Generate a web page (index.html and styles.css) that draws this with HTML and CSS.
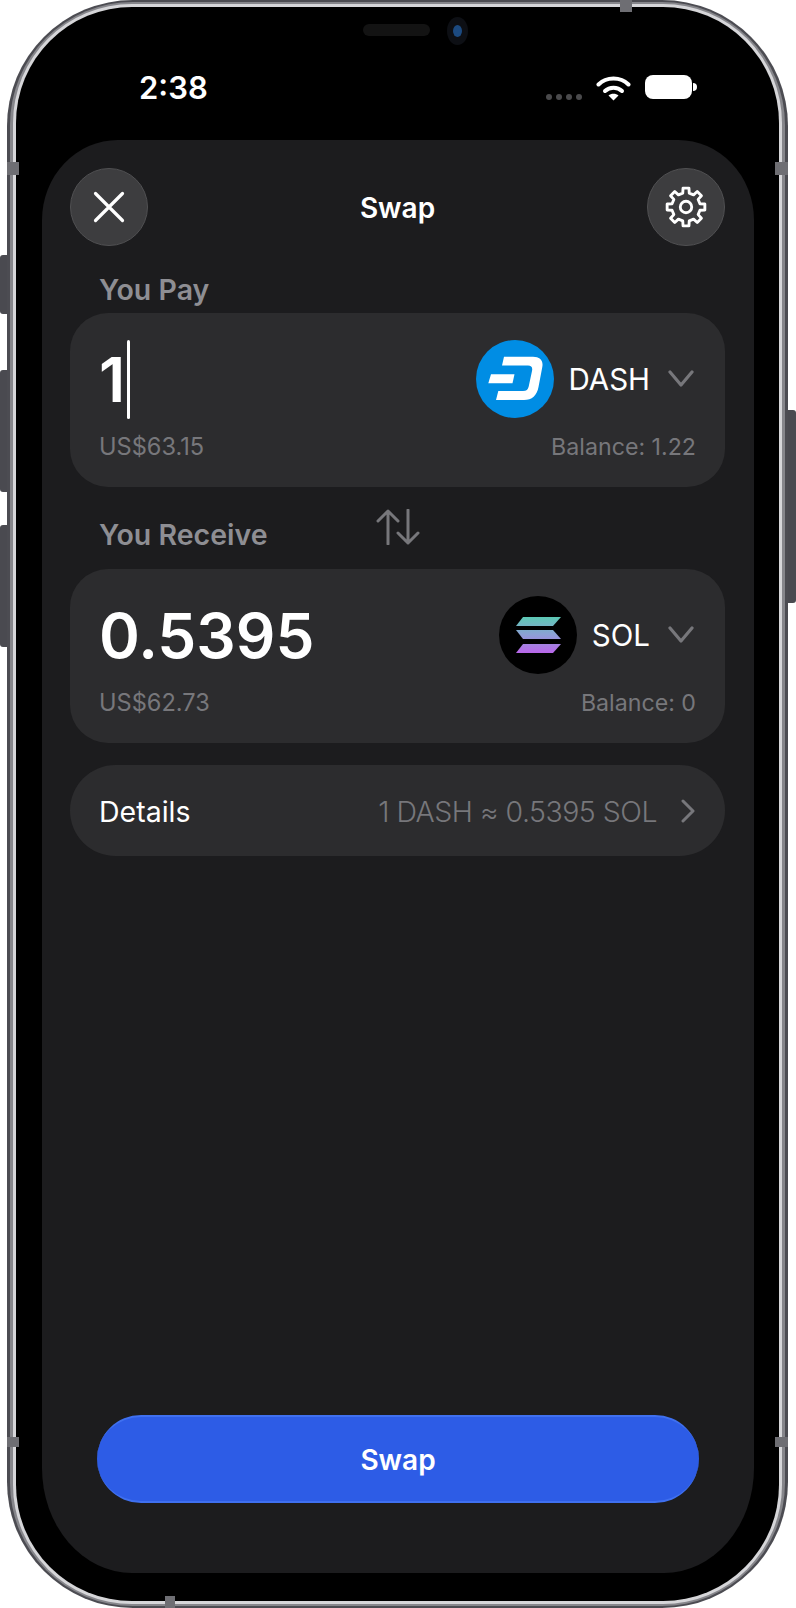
FILE: index.html
```html
<!DOCTYPE html>
<html lang="en">
<head>
    <meta charset="UTF-8">
    <meta name="viewport" content="width=device-width, initial-scale=1.0">
    <title>Swap</title>
    <link rel="stylesheet" href="styles.css">
</head>
<body>
    <div class="device">
        <!-- hardware buttons -->
        <span class="side-btn btn-mute"></span>
        <span class="side-btn btn-up"></span>
        <span class="side-btn btn-down"></span>
        <span class="side-btn btn-power"></span>

        <div class="frame">
            <div class="rim">
                <div class="screen">
                    <span class="speaker"></span>
                    <span class="camera"></span>

                    <div class="status-bar">
                        <span class="time">2:38</span>
                        <div class="status-icons">
                            <div class="signal"><i></i><i></i><i></i><i></i></div>
                            <svg class="wifi" width="35" height="26" viewBox="0 0 35 26">
                                <path d="M2.500 9.500C10.500 1.500 24.500 1.500 32.500 9.500" fill="none" stroke="#fff" stroke-width="4" stroke-linecap="round"/>
                                <path d="M9 16C13.500 11.500 21.500 11.500 26 16" fill="none" stroke="#fff" stroke-width="4" stroke-linecap="round"/>
                                <path d="M12.500 20.500C15 18.300 20 18.300 22.500 20.500L17.500 25.500Z" fill="#fff"/>
                            </svg>
                            <div class="battery"><span class="battery-body"></span><span class="battery-nub"></span></div>
                        </div>
                    </div>

                    <div class="sheet">
                        <div class="sheet-header">
                            <button class="round-btn">
                                <svg width="32" height="32" viewBox="0 0 32 32">
                                    <path d="M2.500 2.500L29.500 29.500M29.500 2.500L2.500 29.500" fill="none" stroke="#fff" stroke-width="3.200" stroke-linecap="round"/>
                                </svg>
                            </button>
                            <div class="sheet-title">Swap</div>
                            <button class="round-btn">
                                <svg width="42" height="42" viewBox="-22 -22 44 44">
                                    <polygon points="-3.400,-14.600 -3.100,-19.750 3.100,-19.750 3.400,-14.600 7.950,-12.720 11.760,-16.180 16.180,-11.760 12.720,-7.950 14.600,-3.400 19.750,-3.100 19.750,3.100 14.600,3.400 12.720,7.950 16.180,11.760 11.760,16.180 7.950,12.720 3.400,14.600 3.100,19.750 -3.100,19.750 -3.400,14.600 -7.950,12.720 -11.760,16.180 -16.180,11.760 -12.720,7.950 -14.600,3.400 -19.750,3.100 -19.750,-3.100 -14.600,-3.400 -12.720,-7.950 -16.180,-11.760 -11.760,-16.180 -7.950,-12.720" fill="none" stroke="#fff" stroke-width="3" stroke-linejoin="round"/>
                                    <circle r="6" fill="none" stroke="#fff" stroke-width="3"/>
                                </svg>
                            </button>
                        </div>

                        <div class="pay-label">You Pay</div>
                        <div class="token-card">
                            <div class="token-row">
                                <div class="amount">1<span class="caret"></span></div>
                                <div class="token">
                                    <svg class="token-icon" width="78" height="78" viewBox="0 0 78 78">
                                        <circle cx="39" cy="39" r="39" fill="#008de4"/>
                                        <path d="M28 16.700H57C64 16.700 67.500 20.500 66.300 27L62.500 47C61 55.500 56 60 48 60H20L22.300 51H47C50.500 51 52 49.500 52.700 46.500L56 31C56.800 27.500 55.500 25.500 52 25.500H26Z" fill="#fff"/>
                                        <path d="M15 34.300H38.500L36.500 43.300H12.300Z" fill="#fff"/>
                                    </svg>
                                    <span class="token-name">DASH</span>
                                    <svg class="chevron" width="26" height="18" viewBox="0 0 26 18">
                                        <path d="M2 2L13 15L24 2" fill="none" stroke="#77777b" stroke-width="3.200" stroke-linecap="round" stroke-linejoin="round"/>
                                    </svg>
                                </div>
                            </div>
                            <div class="sub-row">
                                <span>US$63.15</span>
                                <span class="balance">Balance: 1.22</span>
                            </div>
                        </div>

                        <div class="receive-row">
                            <div class="receive-label">You Receive</div>
                            <svg class="swap-arrows" width="44" height="36" viewBox="0 0 44 36">
                                <path d="M12 35V2M2 12L12 2L22 12M32 1V34M22 24L32 34L42 24" fill="none" stroke="#77777b" stroke-width="3" stroke-linecap="round" stroke-linejoin="round"/>
                            </svg>
                        </div>
                        <div class="token-card">
                            <div class="token-row">
                                <div class="amount">0.5395</div>
                                <div class="token">
                                    <svg class="token-icon" width="78" height="78" viewBox="0 0 78 78">
                                        <defs>
                                            <linearGradient id="solGrad" gradientUnits="userSpaceOnUse" x1="0" y1="21" x2="0" y2="57">
                                                <stop offset="0" stop-color="#5cc9b4"/>
                                                <stop offset="0.5" stop-color="#8e9fd6"/>
                                                <stop offset="1" stop-color="#b966ea"/>
                                            </linearGradient>
                                        </defs>
                                        <circle cx="39" cy="39" r="39" fill="#000"/>
                                        <polygon points="24,21 62,21 54,30 17,30" fill="url(#solGrad)"/>
                                        <polygon points="17,34 54,34 62,43 24,43" fill="url(#solGrad)"/>
                                        <polygon points="24,48 62,48 54,57 17,57" fill="url(#solGrad)"/>
                                    </svg>
                                    <span class="token-name">SOL</span>
                                    <svg class="chevron" width="26" height="18" viewBox="0 0 26 18">
                                        <path d="M2 2L13 15L24 2" fill="none" stroke="#77777b" stroke-width="3.200" stroke-linecap="round" stroke-linejoin="round"/>
                                    </svg>
                                </div>
                            </div>
                            <div class="sub-row">
                                <span>US$62.73</span>
                                <span class="balance">Balance: 0</span>
                            </div>
                        </div>

                        <div class="details">
                            <span class="details-label">Details</span>
                            <span class="details-rate">1 DASH ≈ 0.5395 SOL</span>
                            <svg width="14" height="24" viewBox="0 0 14 24">
                                <path d="M2 2L12 12L2 22" fill="none" stroke="#77777b" stroke-width="3" stroke-linecap="round" stroke-linejoin="round"/>
                            </svg>
                        </div>

                        <button class="swap-btn">Swap</button>
                    </div>
                </div>
            </div>
        </div>

        <!-- antenna bands -->
        <span class="band band-tl"></span>
        <span class="band band-tr"></span>
        <span class="band band-bl"></span>
        <span class="band band-br"></span>
        <span class="band band-top"></span>
        <span class="band band-bottom"></span>
    </div>
</body>
</html>
```

FILE: styles.css
```css
* {
    box-sizing: border-box;
}
html, body {
    margin: 0;
    padding: 0;
    background-color: white;
}
body {
    font-family: Inter, "Liberation Sans", sans-serif;
    color: white;
}
.device {
    position: relative;
    width: 796px;
    height: 1608px;
    padding: 0 8px 0 7px;
}
.frame {
    position: relative;
    height: 100%;
    padding: 2px 3px;
    background-color: #4c4c52;
    border-radius: 126px;
}
.rim {
    height: 100%;
    padding: 5px 6px;
    background-color: #86868b;
    border-radius: 123px;
}
.screen {
    position: relative;
    display: flex;
    flex-direction: column;
    height: 100%;
    background-color: black;
    border-radius: 116px;
    box-shadow: 0 0 0 3px #d6d6d9;
    padding: 0 25px 28px 26px;
}
.speaker {
    position: absolute;
    left: 347px;
    top: 17px;
    width: 67px;
    height: 12px;
    background-color: #131313;
    border-radius: 6px;
}
.camera {
    position: absolute;
    left: 431px;
    top: 10px;
    width: 21px;
    height: 28px;
    background-color: #0d0f14;
    border-radius: 50%;
}
.camera::after {
    content: "";
    position: absolute;
    left: 6px;
    top: 8px;
    width: 9px;
    height: 12px;
    background-color: #1c4a80;
    border-radius: 50%;
}
.side-btn {
    position: absolute;
    left: 0;
    width: 8px;
    background-color: #4a4a50;
    border-radius: 3px 0 0 3px;
}
.btn-mute {
    top: 255px;
    height: 59px;
}
.btn-up {
    top: 370px;
    height: 122px;
}
.btn-down {
    top: 525px;
    height: 122px;
}
.btn-power {
    left: auto;
    right: 0;
    top: 410px;
    height: 193px;
    border-radius: 0 3px 3px 0;
}
.band {
    position: absolute;
    background-color: #6e6e73;
}
.band-tl, .band-bl {
    left: 7px;
    width: 12px;
}
.band-tr, .band-br {
    left: 775px;
    width: 13px;
}
.band-tl, .band-tr {
    top: 162px;
    height: 13px;
}
.band-bl, .band-br {
    top: 1437px;
    height: 10px;
}
.band-top {
    left: 620px;
    top: 0;
    width: 12px;
    height: 12px;
}
.band-bottom {
    left: 165px;
    top: 1596px;
    width: 10px;
    height: 12px;
}

/* status bar */
.status-bar {
    display: flex;
    justify-content: space-between;
    align-items: flex-start;
    flex-shrink: 0;
    height: 133px;
    padding: 0 0 0 97px;
}
.time {
    margin-top: 63px;
    font-size: 31px;
    line-height: 36px;
    font-weight: 600;
}
.status-icons {
    display: flex;
    align-items: flex-start;
    margin-top: 68px;
    margin-right: 57px;
}
.signal {
    display: flex;
    gap: 4px;
    margin: 19px 14px 0 0;
}
.signal i {
    display: block;
    width: 6px;
    height: 6px;
    background-color: #4a4a4c;
    border-radius: 50%;
}
.battery {
    display: flex;
    align-items: center;
    margin-left: 14px;
}
.battery-body {
    width: 47px;
    height: 24px;
    background-color: white;
    border-radius: 8px;
}
.battery-nub {
    width: 4px;
    height: 8px;
    margin-left: 1px;
    background-color: white;
    border-radius: 0 4px 4px 0;
}

/* sheet */
.sheet {
    display: flex;
    flex-direction: column;
    flex: 1;
    padding: 28px 29px 70px 28px;
    background-color: #1c1c1e;
    border-radius: 76px 76px 90px 90px / 80px 80px 105px 105px;
}
.sheet-header {
    display: flex;
    justify-content: space-between;
    align-items: center;
}
.sheet-title {
    padding-top: 2px;
    font-size: 28px;
    font-weight: 600;
}
.round-btn {
    display: flex;
    align-items: center;
    justify-content: center;
    width: 78px;
    height: 78px;
    padding: 0;
    background-color: #3d3d3f;
    border: 1px solid #505052;
    border-radius: 50%;
}
.pay-label, .receive-label {
    color: #8e8e93;
    font-size: 28.500px;
    line-height: 34px;
    font-weight: 600;
    padding-left: 29px;
}
.pay-label {
    margin-top: 27px;
    margin-bottom: 6px;
}
.token-card {
    height: 174px;
    padding: 27px 29px 0 29px;
    background-color: #2c2c2e;
    border-radius: 38px;
}
.token-row {
    display: flex;
    justify-content: space-between;
    align-items: center;
    height: 78px;
}
.amount {
    display: flex;
    align-items: center;
    font-size: 62px;
    font-weight: 600;
}
.caret {
    width: 3px;
    height: 79px;
    margin-left: 2px;
    background-color: white;
    border-radius: 2px;
}
.token {
    display: flex;
    align-items: center;
}
.token-name {
    margin-left: 15px;
    font-size: 29.500px;
    font-weight: 400;
}
.chevron {
    margin: 0 2px 0 18px;
}
.sub-row {
    display: flex;
    justify-content: space-between;
    margin-top: 15px;
    color: #77777b;
    font-size: 23.600px;
    line-height: 28px;
}
.balance {
    font-size: 23.200px;
}
.receive-row {
    display: grid;
    grid-template-columns: 1fr auto 1fr;
    height: 82px;
}
.receive-label {
    margin-top: 31px;
}
.swap-arrows {
    margin-top: 22px;
}
.details {
    display: flex;
    align-items: center;
    height: 91px;
    margin-top: 22px;
    padding: 1px 30px 0 29px;
    background-color: #2c2c2e;
    border-radius: 46px;
    font-size: 28.500px;
}
.details-label {
    flex: 1;
}
.details-rate {
    margin-right: 24px;
    color: #77777b;
    letter-spacing: -0.500px;
    font-weight: 300;
}
.swap-btn {
    width: 602px;
    height: 88px;
    margin: auto 0 0 27px;
    padding-top: 2px;
    background-color: #2d5ce6;
    border: 0;
    border-top: 2px solid #3f70f0;
    border-bottom: 2px solid #3f70f0;
    border-radius: 44px;
    color: white;
    font-family: inherit;
    font-size: 28px;
    font-weight: 600;
}
```
